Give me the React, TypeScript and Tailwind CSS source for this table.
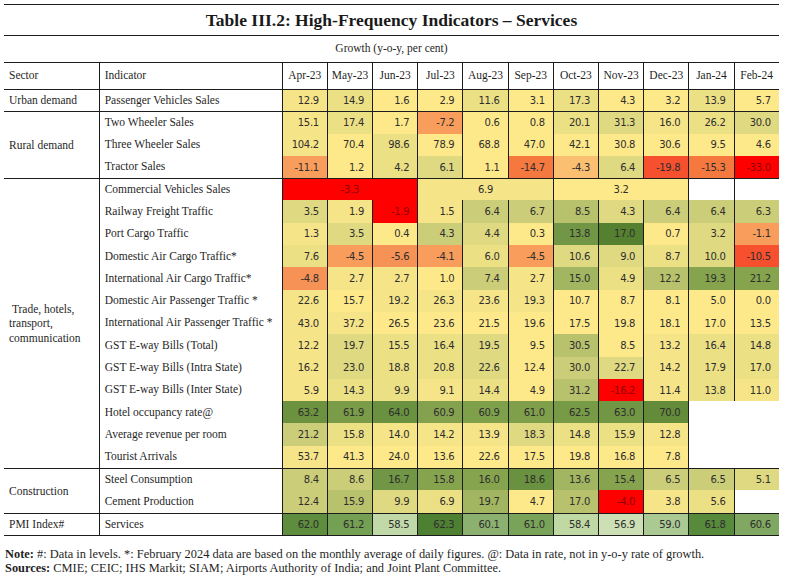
const SERIF = "font-['Liberation_Serif',serif]";
const SANS = "font-['DejaVu_Sans',sans-serif]";

// Heat-map fills, keyed so the data below stays short.
const BG: Record<string, string> = {
  r: "bg-[#ff0000]",
  r2: "bg-[#f6502f]",
  r3: "bg-[#f5793f]",
  o: "bg-[#f89d5c]",
  o3: "bg-[#f69255]",
  o2: "bg-[#fbbf72]",
  y: "bg-[#fee98a]",
  y1: "bg-[#f6e488]",
  y2: "bg-[#ece085]",
  g1: "bg-[#dfd981]",
  g2: "bg-[#cccd78]",
  g3: "bg-[#b8c16c]",
  g4: "bg-[#a2b560]",
  g5: "bg-[#86a34e]",
  g6: "bg-[#719645]",
  g7: "bg-[#54802f]",
  h1: "bg-[#6c9240]",
  h2: "bg-[#7a9c49]",
  h3: "bg-[#6a9140]",
  h4: "bg-[#84a24e]",
  h5: "bg-[#7fa04b]",
  h6: "bg-[#809f4b]",
  h7: "bg-[#779a47]",
  h8: "bg-[#729744]",
  h9: "bg-[#638b3a]",
  p1: "bg-[#5d8d3d]",
  p2: "bg-[#74a054]",
  p3: "bg-[#c1d8a8]",
  p4: "bg-[#4e8032]",
  p5: "bg-[#8cb06f]",
  p6: "bg-[#7aa35a]",
  p7: "bg-[#bfd8a4]",
  p8: "bg-[#cde0b5]",
  p9: "bg-[#abc992]",
  p10: "bg-[#578a3b]",
  p11: "bg-[#80a862]",
  w: "bg-white",
};

type Cell = { v: string; k: string; span?: string; center?: boolean };
type Row = { name: string; cells: Cell[] };
type Group = { sector: string; span: string; rows: Row[] };

const MONTHS = ["Apr-23", "May-23", "Jun-23", "Jul-23", "Aug-23", "Sep-23", "Oct-23", "Nov-23", "Dec-23", "Jan-24", "Feb-24"];

const parse = (s: string): Cell[] =>
  s.split(",").map((p) => {
    const [v, k] = p.split(" ");
    return { v, k };
  });

const GROUPS: Group[] = [
  {
    sector: "Urban demand",
    span: "row-span-1",
    rows: [{ name: "Passenger Vehicles Sales", cells: parse("12.9 y1,14.9 y2,1.6 y,2.9 y,11.6 y2,3.1 y,17.3 y2,4.3 y,3.2 y,13.9 y2,5.7 y") }],
  },
  {
    sector: "Rural demand",
    span: "row-span-3",
    rows: [
      { name: "Two Wheeler Sales", cells: parse("15.1 y1,17.4 y2,1.7 y,-7.2 o,0.6 y,0.8 y,20.1 y2,31.3 g1,16.0 y1,26.2 y2,30.0 g1") },
      { name: "Three Wheeler Sales", cells: parse("104.2 y1,70.4 y,98.6 y2,78.9 y,68.8 y,47.0 y,42.1 y,30.8 y,30.6 y,9.5 y,4.6 y") },
      { name: "Tractor Sales", cells: parse("-11.1 o,1.2 y,4.2 y2,6.1 g1,1.1 y,-14.7 r3,-4.3 o2,6.4 g1,-19.8 r2,-15.3 r3,-33.0 r") },
    ],
  },
  {
    sector: "\u00a0Trade, hotels, transport, communication",
    span: "row-span-13",
    rows: [
      {
        name: "Commercial Vehicles Sales",
        cells: [
          { v: "-3.3", k: "r", span: "col-span-3", center: true },
          { v: "6.9", k: "y1", span: "col-span-3", center: true },
          { v: "3.2", k: "y", span: "col-span-3", center: true },
          { v: "", k: "w" },
          { v: "", k: "w" },
        ],
      },
      { name: "Railway Freight Traffic", cells: parse("3.5 g1,1.9 y1,-1.9 r,1.5 y1,6.4 g2,6.7 g2,8.5 g3,4.3 g1,6.4 g2,6.4 g2,6.3 g2") },
      { name: "Port Cargo Traffic", cells: parse("1.3 y1,3.5 g1,0.4 y,4.3 g2,4.4 g1,0.3 y,13.8 g6,17.0 g7,0.7 y,3.2 g1,-1.1 o") },
      { name: "Domestic Air Cargo Traffic*", cells: parse("7.6 y2,-4.5 o,-5.6 o3,-4.1 o,6.0 y2,-4.5 o,10.6 g1,9.0 g1,8.7 y2,10.0 g1,-10.5 r2") },
      { name: "International Air Cargo Traffic*", cells: parse("-4.8 o3,2.7 y1,2.7 y1,1.0 y,7.4 g2,2.7 y1,15.0 g4,4.9 y2,12.2 g3,19.3 g5,21.2 g5") },
      { name: "Domestic Air Passenger Traffic *", cells: parse("22.6 y1,15.7 y,19.2 y1,26.3 y1,23.6 y1,19.3 y1,10.7 y,8.7 y,8.1 y,5.0 y,0.0 y") },
      { name: "International Air Passenger Traffic *", cells: parse("43.0 y1,37.2 y1,26.5 y,23.6 y,21.5 y,19.6 y,17.5 y,19.8 y,18.1 y,17.0 y,13.5 y") },
      { name: "GST E-way Bills (Total)", cells: parse("12.2 y1,19.7 g1,15.5 y2,16.4 y2,19.5 g1,9.5 y,30.5 g3,8.5 y,13.2 y1,16.4 y2,14.8 y2") },
      { name: "GST E-way Bills (Intra State)", cells: parse("16.2 y1,23.0 g1,18.8 y2,20.8 y2,22.6 g1,12.4 y,30.0 g2,22.7 g1,14.2 y1,17.9 y2,17.0 y2") },
      { name: "GST E-way Bills (Inter State)", cells: parse("5.9 y1,14.3 y2,9.9 y2,9.1 y1,14.4 y2,4.9 y,31.2 g3,-16.2 r,11.4 y1,13.8 y2,11.0 y1") },
      {
        name: "Hotel occupancy rate@",
        cells: [
          ...parse("63.2 h1,61.9 h2,64.0 h3,60.9 h4,60.9 h5,61.0 h6,62.5 h7,63.0 h8,70.0 h9"),
          { v: "", k: "w", span: "col-span-2 row-span-3" },
        ],
      },
      { name: "Average revenue per room", cells: parse("21.2 g2,15.8 y2,14.0 y1,14.2 y1,13.9 y1,18.3 g1,14.8 y2,15.9 y2,12.8 y1") },
      { name: "Tourist Arrivals", cells: parse("53.7 y1,41.3 y,24.0 y,13.6 y,22.6 y,17.5 y,19.8 y,16.8 y,7.8 y") },
    ],
  },
  {
    sector: "Construction",
    span: "row-span-2",
    rows: [
      { name: "Steel Consumption", cells: parse("8.4 g2,8.6 g2,16.7 g6,15.8 g5,16.0 g5,18.6 h3,13.6 g4,15.4 g5,6.5 g2,6.5 g2,5.1 g1") },
      { name: "Cement Production", cells: [...parse("12.4 g2,15.9 g3,9.9 g1,6.9 y2,19.7 g4,4.7 y,17.0 g3,-4.0 r,3.8 y1,5.6 y2"), { v: "", k: "w" }] },
    ],
  },
  {
    sector: "PMI Index#",
    span: "row-span-1",
    rows: [{ name: "Services", cells: parse("62.0 p1,61.2 p2,58.5 p3,62.3 p4,60.1 p5,61.0 p6,58.4 p7,56.9 p8,59.0 p9,61.8 p10,60.6 p11") }],
  },
];

function ValueCell({ cell, top }: { cell: Cell; top: boolean }) {
  const red = cell.k === "r";
  return (
    <div
      className={`flex items-center border-l border-[#1c1c1c] ${cell.center ? "justify-center" : "justify-end pr-[8px]"} ${
        top ? "border-t" : ""
      } ${BG[cell.k]} ${cell.span ?? ""} ${SANS} text-[10px] tracking-[-0.3px] ${red ? "text-[#8e0000]" : "text-[#2e2e2e]"}`}
    >
      {cell.v}
    </div>
  );
}

export default function App() {
  return (
    <div className="h-[579px] w-[786px] overflow-hidden bg-white text-[#1f1f1f]">
      <div className="ml-[4px] w-[775px] pt-[4px]">
        <div
          className={`flex h-[32px] items-center justify-center border-y border-[#1c1c1c] ${SERIF} text-[17.5px] font-bold text-[#1a1a1a]`}
        >
          Table III.2: High-Frequency Indicators – Services
        </div>
        <div className={`flex h-[26px] items-center justify-center ${SERIF} text-[11.5px]`}>Growth (y-o-y, per cent)</div>

        <div className="grid grid-cols-[94.7px_183px_repeat(11,45.2px)] grid-rows-[26px_repeat(20,22.3px)] border-y border-[#1c1c1c]">
          <div className={`flex items-center pl-[5px] ${SERIF} text-[11.5px]`}>Sector</div>
          <div className={`flex items-center border-l border-[#1c1c1c] pl-[5px] ${SERIF} text-[11.5px]`}>Indicator</div>
          {MONTHS.map((m) => (
            <div key={m} className={`flex items-center justify-center border-l border-[#1c1c1c] ${SERIF} text-[11.5px]`}>
              {m}
            </div>
          ))}

          {GROUPS.map((g) =>
            g.rows.map((row, i) => (
              <div key={row.name} className="contents">
                {i === 0 && (
                  <div
                    className={`flex items-center border-t border-[#1c1c1c] pl-[5px] pr-[4px] ${g.span} ${SERIF} text-[11.5px] leading-[14.5px]`}
                  >
                    {g.sector}
                  </div>
                )}
                <div
                  className={`flex items-center whitespace-nowrap border-l border-[#1c1c1c] pl-[5px] ${i === 0 ? "border-t" : ""} ${SERIF} text-[11.5px]`}
                >
                  {row.name}
                </div>
                {row.cells.map((c, j) => (
                  <ValueCell key={j} cell={c} top={i === 0} />
                ))}
              </div>
            ))
          )}
        </div>
      </div>

      <div className={`mt-[11px] pl-[5px] ${SERIF} text-[12.4px] leading-[14px]`}>
        <p>
          <span className="font-bold">Note:</span> #: Data in levels. *: February 2024 data are based on the monthly average of daily
          figures. @: Data in rate, not in y-o-y rate of growth.
        </p>
        <p>
          <span className="font-bold">Sources:</span> CMIE; CEIC; IHS Markit; SIAM; Airports Authority of India; and Joint Plant
          Committee.
        </p>
      </div>
    </div>
  );
}
